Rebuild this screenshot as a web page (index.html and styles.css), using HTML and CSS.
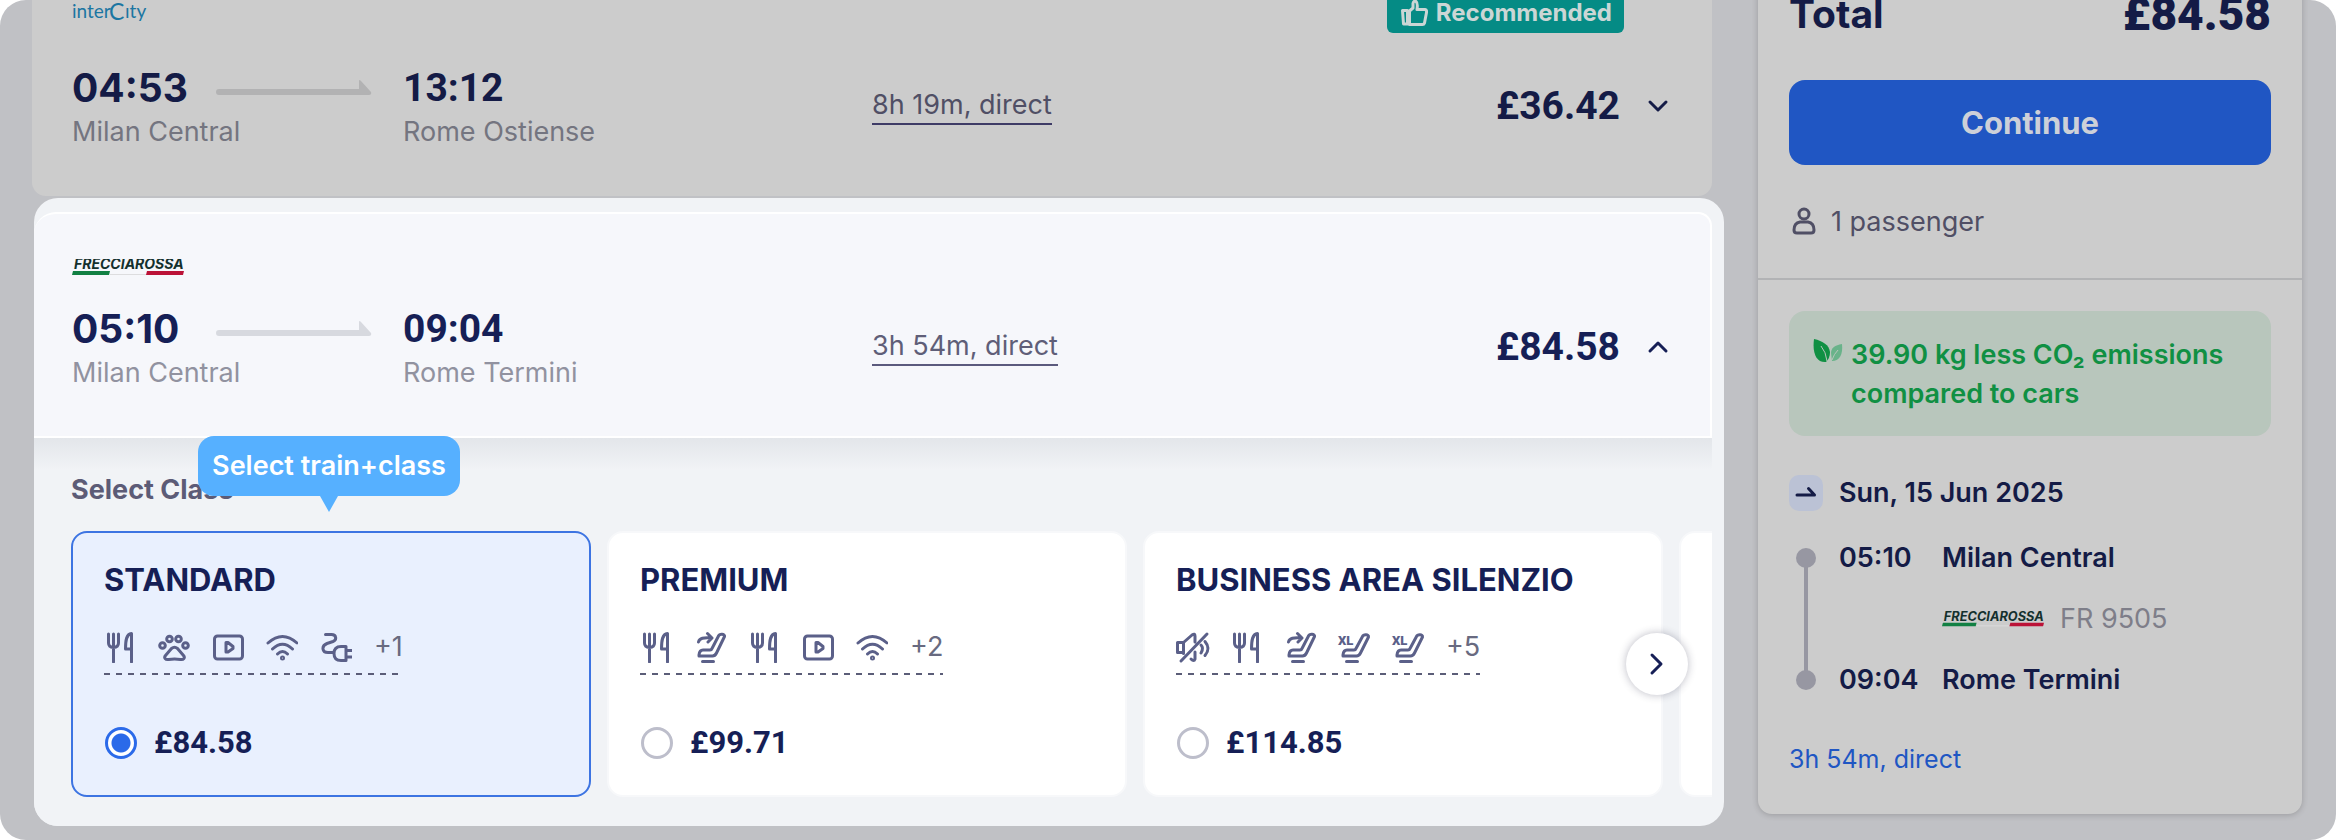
FILE: index.html
```html
<!doctype html>
<html lang="en">
<head>
  <meta charset="utf-8">
  <title>Select train and class</title>
  <meta name="viewport" content="width=device-width, initial-scale=1">
  <link rel="stylesheet" href="styles.css">
</head>

<body>

  <!-- shared icons -->
  <svg class="sprite" aria-hidden="true">
    <symbol id="i-food" viewBox="0 0 32 32"><path d="M4.500 3v9q0 4 5 4.500q5-.5 5-4.500V3M9.500 3v28M27.500 31V2.500C22.500 3 21.500 9 21.500 18h6"/></symbol>
    <symbol id="i-pets" viewBox="0 0 32 32"><circle cx="4.500" cy="14.500" r="2.800"/><circle cx="11.500" cy="8" r="2.800"/><circle cx="20.500" cy="8" r="2.800"/><circle cx="27.500" cy="14.500" r="2.800"/><path d="M13.500 17.500q3-2.500 6 0l6 7c2 2.500 0 4.500-3 4q-6-1-12 0c-3 .5-5-1.500-3-4z"/></symbol>
    <symbol id="i-video" viewBox="0 0 32 32"><rect x="2.500" y="5" width="28" height="23" rx="3"/><path d="M14 11.500v9.500h2l5-3.500v-2l-5-4z"/></symbol>
    <symbol id="i-wifi" viewBox="0 0 32 32"><path d="M2 12Q16.500-1 31 12M6.500 18q10-9.500 20 0M11.500 23q5-5 10 0"/><circle cx="16.500" cy="27" r="1"/></symbol>
    <symbol id="i-power" viewBox="0 0 32 32"><path d="M5.500 3.500h6c5 0 5.500 5.500 1.500 7L7 12.500c-6 2.500-5 9 1 9h5M26 15.500h-5q-7 0-7 7t7 7h5zM26 19.500h6M26 26h6"/></symbol>
    <symbol id="i-recline" viewBox="0 0 32 32"><path d="M24.500 5c1-2.500 6.500-2.500 6 .5L22.500 22Q21 25 18.500 25H5v-1q.5-5 4-5h7q1.500 0 2-1.500zM8.500 30.500h11M4.500 11c1-4 5-4.500 13-4M13.500 2.500l4.500 4.500-4 4"/></symbol>
    <symbol id="i-xl" viewBox="0 0 32 32"><path d="M24.500 5.500c1-2.500 6.500-2.500 6 .5L22.500 22Q21 25 18.500 25H5v-1q.5-5 4-5h7q1.500 0 2-1.500zM8.500 30.500h11"/><text x="0" y="14">XL</text></symbol>
    <symbol id="i-silent" viewBox="0 0 32 32"><path d="M7.500 21.500H1.500v-10h6L16 4q3-2 3 1v6M7.500 11.500v11M31 3L5 30M19 21v7q-1 3-4 0M25 14q3 3 0 8M29 10.500q6 7 0 14"/></symbol>
    <symbol id="i-up" viewBox="0 0 24 16"><path d="M4 12l8-8 8 8"/></symbol>
    <symbol id="i-down" viewBox="0 0 24 16"><path d="M4 4l8 8 8-8"/></symbol>
    <symbol id="i-arrow" viewBox="0 0 156 16"><path d="M3 9h140V1q0-2 2 0l10 11q1 3-2 3H3a3 3 0 0 1 0-6z"/></symbol>
    <symbol id="i-freccia" viewBox="0 0 112 17">
      <text x="2" y="10">FRECCIAROSSA</text>
      <path fill="#128043" d="M1 12h37l-1 4H0z"/>
      <path fill="#dddddf" d="M38 15h36v1H38z"/>
      <path fill="#bb1237" d="M75 12h37l-1 4H74z"/>
    </symbol>
  </svg>

  <div class="page">

    <main class="results">

      <section class="trip trip-dim">
        <div class="trip-top">
          <svg class="intercity" viewBox="0 0 80 28" role="img" aria-label="interCity"><text x="0" y="18">inter</text><text class="big-c" x="37" y="20">C</text><text x="53" y="18">ıty</text></svg>
          <span class="badge">
            <svg viewBox="0 0 28 28" aria-hidden="true"><path d="M2.500 11.500h5V25h-4zM9.500 12L13 9V4.500q.5-3 3-2 2 1.500 1 8h8q2 .5 1.500 3L24.500 24q-.5 1.500-2 1.500h-13z"/></svg>
            Recommended
          </span>
        </div>
        <div class="trip-row">
          <div class="stop">
            <div class="stop-time"><time>04:53</time><svg class="arrow" aria-hidden="true"><use href="#i-arrow"/></svg></div>
            <div class="station">Milan Central</div>
          </div>
          <div class="stop">
            <div class="stop-time arrive"><time>13:12</time></div>
            <div class="station">Rome Ostiense</div>
          </div>
          <a class="duration" href="#">8h 19m, direct</a>
          <div class="price">£36.42</div>
          <button class="toggle" type="button" aria-label="Show classes"><svg><use href="#i-down"/></svg></button>
        </div>
      </section>

      <section class="spotlight">
        <div class="trip trip-open">
          <div class="trip-top">
            <svg class="freccia" role="img" aria-label="Frecciarossa"><use href="#i-freccia"/></svg>
          </div>
          <div class="trip-row">
            <div class="stop">
              <div class="stop-time"><time>05:10</time><svg class="arrow" aria-hidden="true"><use href="#i-arrow"/></svg></div>
              <div class="station">Milan Central</div>
            </div>
            <div class="stop">
              <div class="stop-time arrive"><time>09:04</time></div>
              <div class="station">Rome Termini</div>
            </div>
            <a class="duration" href="#">3h 54m, direct</a>
            <div class="price">£84.58</div>
            <button class="toggle" type="button" aria-label="Hide classes"><svg><use href="#i-up"/></svg></button>
          </div>
        </div>

        <div class="classes">
          <h2>Select Class</h2>
          <div class="tip">Select train+class</div>
          <div class="cards">
            <label class="card">
              <span class="card-title">STANDARD</span>
              <span class="features">
                <svg><use href="#i-food"/></svg><svg><use href="#i-pets"/></svg><svg><use href="#i-video"/></svg><svg><use href="#i-wifi"/></svg><svg><use href="#i-power"/></svg>
                <span>+1</span>
              </span>
              <span class="pick"><input type="radio" name="class" checked>£84.58</span>
            </label>
            <label class="card">
              <span class="card-title">PREMIUM</span>
              <span class="features">
                <svg><use href="#i-food"/></svg><svg><use href="#i-recline"/></svg><svg><use href="#i-food"/></svg><svg><use href="#i-video"/></svg><svg><use href="#i-wifi"/></svg>
                <span>+2</span>
              </span>
              <span class="pick"><input type="radio" name="class">£99.71</span>
            </label>
            <label class="card">
              <span class="card-title">BUSINESS AREA SILENZIO</span>
              <span class="features">
                <svg><use href="#i-silent"/></svg><svg><use href="#i-food"/></svg><svg><use href="#i-recline"/></svg><svg><use href="#i-xl"/></svg><svg><use href="#i-xl"/></svg>
                <span>+5</span>
              </span>
              <span class="pick"><input type="radio" name="class">£114.85</span>
            </label>
            <div class="card"></div>
          </div>
          <button class="next" type="button" aria-label="More classes"><svg viewBox="0 0 16 24"><path d="M3 3l9 9-9 9"/></svg></button>
        </div>
      </section>

    </main>

    <aside class="summary">
      <div class="total"><span>Total</span><strong>£84.58</strong></div>
      <button class="continue" type="button">Continue</button>
      <div class="passengers">
        <svg viewBox="0 0 28 32" aria-hidden="true"><circle cx="15" cy="8" r="5"/><path d="M11 16h8q6 1 6 8 0 3-3 3H8q-3 0-3-3 0-7 6-8z"/></svg>
        1 passenger
      </div>
      <hr>
      <div class="eco">
        <svg viewBox="0 0 30 24" aria-hidden="true"><path fill="#109043" d="M1 0c9 2 15 6 16 13q0 6-4 10C4 24-1 15 1 0z"/><path fill="#69b38a" d="M29 5c-7 1-11 4-11 9l1 8c8 0 11-7 10-17z"/><path class="vein" d="M8 7q5 6 6 15M25 11q-4 4-6 10"/></svg>
        <p>39.90 kg less CO₂ emissions compared to cars</p>
      </div>
      <div class="date">
        <svg viewBox="0 0 34 36" aria-hidden="true"><path d="M8 20h17.500l-6-6.500"/></svg>
        Sun, 15 Jun 2025
      </div>
      <ol class="timeline">
        <li><time>05:10</time><span>Milan Central</span></li>
        <li class="train"><svg class="freccia" role="img" aria-label="Frecciarossa"><use href="#i-freccia"/></svg><span>FR 9505</span></li>
        <li><time>09:04</time><span>Rome Termini</span></li>
      </ol>
      <a class="details" href="#">3h 54m, direct</a>
    </aside>

  </div>

</body>
</html>
```
FILE: styles.css
```css
* {
  box-sizing:border-box;
}
body {
  margin:0;
  background:#fff;
  font-family:Inter, 'Liberation Sans', sans-serif;
  font-size:27px;
  line-height:36px;
  color:#161f56;
}
button {
  border:0;
  padding:0;
  font-family:inherit;
  cursor:pointer;
}
.sprite {
  position:absolute;
  width:0;
  height:0;
}

/* dimmed page */
.page {
  display:grid;
  grid-template-columns:minmax(0, 1fr) 544px;
  gap:46px;
  align-items:start;
  min-height:100vh;
  padding:0 34px 0 32px;
  border-radius:26px;
  background:#c0c1c5;
  overflow:hidden;
}

/* trips */
.trip-dim {
  padding:0 42px 46px 40px;
  border-radius:0 0 14px 14px;
  background:#ccc;
  color:#141b46;
}
.trip-open {
  padding:29px 40px 45px 38px;
  border:solid #fff;
  border-width:2px 2px 2px 0;
  border-radius:22px 14px 0 0;
  background:#f6f7fb;
}
.trip-top {
  display:flex;
  justify-content:space-between;
  align-items:flex-end;
  height:33px;
  margin-bottom:29px;
}
.trip-open .trip-top {
  margin-bottom:27px;
}
.trip-row {
  display:grid;
  grid-template-columns:331px 469px 1fr auto 24px;
  align-items:center;
}
.stop-time {
  display:flex;
  align-items:center;
  height:52px;
  font-size:39px;
  line-height:48px;
  font-weight:700;
}
.arrive,
.price {
  font-family:Roboto, sans-serif;
}
.arrow {
  width:156px;
  height:16px;
  margin:0 31px 0 auto;
  fill:#d7d9df;
}
.trip-dim .arrow {
  fill:#b2b2b3;
}
.station {
  color:#9192a0;
}
.trip-dim .station {
  color:#747580;
}
.duration {
  justify-self:start;
  border-bottom:2px solid #5b5a7d;
  color:#5f5e78;
  text-decoration:none;
}
.trip-dim .duration {
  border-color:#3e3b66;
  color:#504f65;
}
.price {
  margin-right:26px;
  font-size:39px;
  line-height:48px;
  font-weight:700;
}
.toggle {
  width:24px;
  height:16px;
  background:none;
  color:inherit;
}
.toggle svg {
  display:block;
  width:24px;
  height:16px;
  fill:none;
  stroke:currentColor;
  stroke-width:3;
  stroke-linecap:round;
  stroke-linejoin:round;
}
.intercity {
  align-self:flex-start;
  width:80px;
  height:28px;
  fill:#1b76a2;
  font-family:Lato, sans-serif;
  font-size:19px;
}
.intercity .big-c {
  font-size:23px;
}
.badge {
  display:flex;
  align-items:center;
  gap:8px;
  height:40px;
  margin-right:46px;
  padding:0 12px 0 13px;
  border-radius:6px;
  background:#058b85;
  color:#cbd6d5;
  font-size:24px;
  font-weight:700;
}
.badge svg {
  width:28px;
  height:28px;
  fill:none;
  stroke:#cbd6d5;
  stroke-width:3;
  stroke-linejoin:round;
}
.freccia {
  width:112px;
  height:17px;
  fill:#14302d;
  font-size:14px;
  font-style:italic;
  font-weight:700;
}

/* highlighted step */
.spotlight {
  margin:2px -12px 14px 2px;
  padding:14px 12px 0 0;
  border-radius:24px;
  background:#f1f3f6;
}
.classes {
  position:relative;
  padding:34px 0 29px 37px;
  background:linear-gradient(#e3e6ea, #f1f3f6 32px);
  border-radius:0 0 24px 24px;
}
.classes h2 {
  margin:0 0 23px;
  font-size:27px;
  line-height:36px;
  font-weight:700;
  color:#5c5b76;
}
.tip {
  position:absolute;
  top:-2px;
  left:164px;
  width:262px;
  border-radius:16px;
  background:#56b0ff;
  color:#fff;
  line-height:60px;
  font-weight:600;
  text-align:center;
}
.tip:after {
  content:'';
  position:absolute;
  top:100%;
  left:50%;
  margin-left:-9px;
  border:9px solid transparent;
  border-top:16px solid #56b0ff;
  border-bottom:0;
}
.cards {
  display:flex;
  gap:16px;
  overflow:hidden;
}
.card {
  display:flex;
  flex:0 0 520px;
  flex-direction:column;
  align-items:flex-start;
  padding:27px 31px 36px;
  border:2px solid #f7f8fa;
  border-radius:16px;
  background:#fff;
}
.card:has(:checked) {
  border-color:#3d74e2;
  background:#e9f0fe;
}
.card-title {
  font-size:31px;
  line-height:40px;
  font-weight:700;
}
.features {
  display:flex;
  align-items:center;
  gap:22px;
  height:44px;
  margin:31px 0 52px;
  padding-bottom:12px;
  background:repeating-linear-gradient(90deg, #5b5d78 0 6px, transparent 6px 12px) bottom / 100% 2px no-repeat;
  color:#686a80;
}
.features svg {
  width:32px;
  height:32px;
  overflow:visible;
  fill:none;
  stroke:#5b6089;
  stroke-width:3;
  stroke-linecap:round;
  stroke-linejoin:round;
}
#i-silent,
#i-xl {
  overflow:visible;
}
#i-xl text {
  fill:#5b6089;
  stroke:none;
  font-family:Roboto, sans-serif;
  font-size:13px;
  font-weight:900;
}
.pick {
  display:flex;
  align-items:center;
  gap:17px;
  height:32px;
  font-family:Roboto, sans-serif;
  font-size:31px;
  font-weight:700;
}
.pick input {
  appearance:none;
  width:32px;
  height:32px;
  margin:0 0 0 1px;
  border:3px solid #bdbecb;
  border-radius:50%;
  background:#fff;
}
.pick input:checked {
  border-color:#2b6ae9;
  background:radial-gradient(circle, #2b6ae9 9px, #fff 10px);
}
.next {
  position:absolute;
  right:24px;
  bottom:131px;
  width:62px;
  height:62px;
  border-radius:50%;
  background:#fff;
  box-shadow:0 0 8px rgba(30, 30, 60, .3);
}
.next svg {
  display:block;
  width:16px;
  height:24px;
  margin:auto;
  fill:none;
  stroke:#161f56;
  stroke-width:3;
  stroke-linecap:round;
  stroke-linejoin:round;
}

/* booking summary */
.summary {
  margin-top:-16px;
  padding:0 31px 37px;
  border-radius:0 0 14px 14px;
  background:#ccc;
  box-shadow:0 1px 6px rgba(0, 0, 0, .2);
  color:#141b46;
}
.total {
  display:flex;
  justify-content:space-between;
  align-items:center;
  height:60px;
  margin-bottom:36px;
  font-size:39px;
  font-weight:700;
}
.total strong {
  font-family:Roboto, sans-serif;
  font-size:46px;
}
.continue {
  display:block;
  width:100%;
  height:85px;
  border-radius:16px;
  background:#2056c3;
  color:#cdd0d8;
  font-size:31px;
  font-weight:700;
}
.passengers {
  display:flex;
  align-items:center;
  gap:14px;
  margin-top:39px;
  color:#504f65;
}
.passengers svg {
  width:28px;
  height:32px;
  fill:none;
  stroke:#504f65;
  stroke-width:3;
}
.summary hr {
  height:2px;
  margin:38px -31px 31px;
  border:0;
  background:#b2b3b5;
}
.eco {
  display:flex;
  gap:8px;
  padding:24px 24px 23px;
  border-radius:16px;
  background:#b8c6bc;
  color:#109043;
  line-height:39px;
  font-weight:600;
}
.eco svg {
  flex:none;
  width:30px;
  height:24px;
  margin-top:4px;
}
.vein {
  fill:none;
  stroke:#b8c6bc;
  stroke-width:1;
}
.eco p {
  margin:0;
}
.date {
  display:flex;
  gap:16px;
  margin:39px 0 29px;
  font-weight:600;
}
.date svg {
  width:34px;
  height:36px;
  border-radius:10px;
  background:#bbc2d5;
  fill:none;
  stroke:#141b46;
  stroke-width:3;
  stroke-linecap:round;
  stroke-linejoin:round;
}
.timeline {
  display:grid;
  gap:25px;
  margin:0 0 43px;
  padding:0;
  list-style:none;
  font-weight:600;
  background:linear-gradient(#9797a2, #9797a2) 15px 50% / 4px calc(100% - 36px) no-repeat;
}
.timeline li {
  display:flex;
  align-items:center;
}
.timeline li:before {
  content:'';
  width:20px;
  height:20px;
  margin:0 23px 0 7px;
  border-radius:50%;
  background:#9797a2;
}
.timeline time {
  width:103px;
}
.timeline .train {
  gap:16px;
  padding-left:153px;
  color:#7e7e89;
  font-weight:400;
}
.timeline .train:before {
  display:none;
}
.timeline .freccia {
  width:102px;
}
.details {
  display:block;
  color:#2056c3;
  font-size:25px;
  text-decoration:none;
}
```
